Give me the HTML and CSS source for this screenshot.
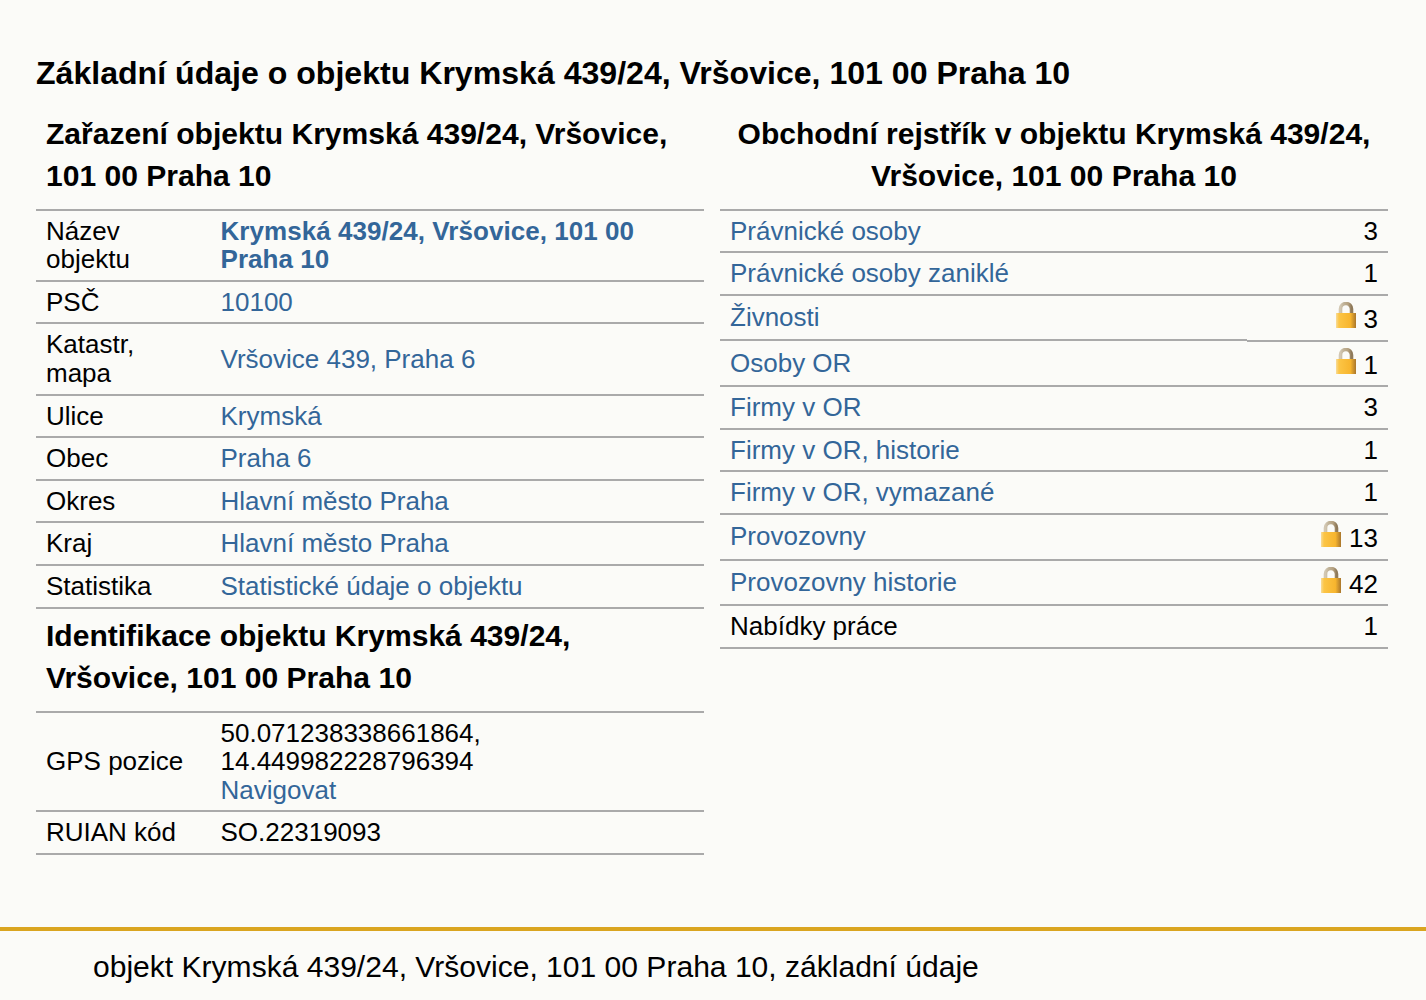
FILE: index.html
```html
<!DOCTYPE html>
<html lang="cs">
<head>
<meta charset="utf-8">
<title>Základní údaje o objektu</title>
<link rel="stylesheet" href="styles.css">
</head>
<body>
<svg class="defs" width="0" height="0" aria-hidden="true">
  <defs>
    <linearGradient id="lockbody" x1="0" x2="1" y1="0" y2="0">
      <stop offset="0" stop-color="#f8dc98"/>
      <stop offset=".15" stop-color="#fcc545"/>
      <stop offset=".72" stop-color="#f7b52e"/>
      <stop offset="1" stop-color="#a9762c"/>
    </linearGradient>
    <linearGradient id="lockbar" x1="0" x2="1" y1="0" y2="0">
      <stop offset="0" stop-color="#d2c7b2"/>
      <stop offset=".3" stop-color="#c0b297"/>
      <stop offset=".7" stop-color="#b5a180"/>
      <stop offset="1" stop-color="#8f7a5a"/>
    </linearGradient>
    <symbol id="lock" viewBox="0 0 20 26">
      <path d="M4.5 12V7a5.5 5.5 0 0 1 11 0V12" fill="none" stroke="url(#lockbar)" stroke-width="3.6"/>
      <rect x="0" y="11" width="20" height="15" fill="url(#lockbody)"/>
    </symbol>
  </defs>
</svg>
<main class="page">
  <h1 class="title">Základní údaje o objektu Krymská 439/24, Vršovice, 101 00 Praha 10</h1>
  <div class="columns">
    <section class="col">
      <h2 class="heading">Zařazení objektu Krymská 439/24, Vršovice, 101 00 Praha 10</h2>
      <div class="rows">
        <div class="kv h71"><div class="k">Název objektu</div><div class="v"><a class="strong" href="#">Krymská 439/24, Vršovice, 101 00 Praha 10</a></div></div>
        <div class="kv h42"><div class="k">PSČ</div><div class="v"><a href="#">10100</a></div></div>
        <div class="kv h72"><div class="k">Katastr, mapa</div><div class="v"><a href="#">Vršovice 439, Praha 6</a></div></div>
        <div class="kv h42"><div class="k">Ulice</div><div class="v"><a href="#">Krymská</a></div></div>
        <div class="kv h43"><div class="k">Obec</div><div class="v"><a href="#">Praha 6</a></div></div>
        <div class="kv h42"><div class="k">Okres</div><div class="v"><a href="#">Hlavní město Praha</a></div></div>
        <div class="kv h43"><div class="k">Kraj</div><div class="v"><a href="#">Hlavní město Praha</a></div></div>
        <div class="kv h43"><div class="k">Statistika</div><div class="v"><a href="#">Statistické údaje o objektu</a></div></div>
      </div>
      <h2 class="heading sub">Identifikace objektu Krymská 439/24, Vršovice, 101 00 Praha 10</h2>
      <div class="rows">
        <div class="kv h99"><div class="k">GPS pozice</div><div class="v">50.071238338661864, 14.449982228796394<br><a href="#">Navigovat</a></div></div>
        <div class="kv h43"><div class="k">RUIAN kód</div><div class="v">SO.22319093</div></div>
      </div>
    </section>
    <section class="col">
      <h2 class="heading center">Obchodní rejstřík v objektu Krymská 439/24, Vršovice, 101 00 Praha 10</h2>
      <div class="rows">
        <div class="cnt h42"><div class="label"><a href="#">Právnické osoby</a></div><div class="num">3</div></div>
        <div class="cnt h43"><div class="label"><a href="#">Právnické osoby zaniklé</a></div><div class="num">1</div></div>
        <div class="cnt h46 step"><div class="label"><a href="#">Živnosti</a></div><div class="num"><svg class="lock"><use href="#lock"/></svg>3</div></div>
        <div class="cnt h45"><div class="label"><a href="#">Osoby OR</a></div><div class="num"><svg class="lock"><use href="#lock"/></svg>1</div></div>
        <div class="cnt h43"><div class="label"><a href="#">Firmy v OR</a></div><div class="num">3</div></div>
        <div class="cnt h42"><div class="label"><a href="#">Firmy v OR, historie</a></div><div class="num">1</div></div>
        <div class="cnt h43"><div class="label"><a href="#">Firmy v OR, vymazané</a></div><div class="num">1</div></div>
        <div class="cnt h46"><div class="label"><a href="#">Provozovny</a></div><div class="num"><svg class="lock"><use href="#lock"/></svg>13</div></div>
        <div class="cnt h45"><div class="label"><a href="#">Provozovny historie</a></div><div class="num"><svg class="lock"><use href="#lock"/></svg>42</div></div>
        <div class="cnt h43"><div class="label">Nabídky práce</div><div class="num">1</div></div>
      </div>
    </section>
  </div>
</main>
<footer class="foot">objekt Krymská 439/24, Vršovice, 101 00 Praha 10, základní údaje</footer>
</body>
</html>
```
FILE: styles.css
```css
* { box-sizing: border-box; }
html, body { margin: 0; padding: 0; }
body {
  height: 1000px;
  overflow: hidden;
  background: #fbfbf8;
  color: #000;
  font-family: "Liberation Sans", Arial, sans-serif;
  font-size: 26px;
  line-height: 28.5px;
}
a { color: #336699; text-decoration: none; }
.defs { position: absolute; }
.page { height: 927px; padding: 52px 38px 0 36px; }
.title { margin: 0 0 19px; font-size: 32.1px; line-height: 42px; font-weight: 700; }
.columns { display: grid; grid-template-columns: 668px 668px; gap: 16px; }
.heading { margin: 0; padding: 0 10px 12px; font-size: 30.05px; line-height: 42px; font-weight: 700; }
.heading.sub { padding-top: 6px; }
.center { text-align: center; }
.rows { border-top: 2px solid #aaa; }
.h42 { height: 42px; }
.h43 { height: 43px; }
.h45 { height: 45px; }
.h46 { height: 46px; }
.h71 { height: 71px; }
.h72 { height: 72px; }
.h99 { height: 99px; }
.kv {
  display: grid;
  grid-template-columns: 174.5px 1fr;
  align-items: center;
  border-bottom: 2px solid #aaa;
  padding: 0 10px;
}
.h71.kv, .h72.kv { padding-bottom: .4px; }
.k { padding-right: 24px; }
.v { min-width: 0; }
.strong { font-weight: 700; letter-spacing: .05px; }
.cnt {
  display: flex;
  justify-content: space-between;
  align-items: center;
  border-bottom: 2px solid #aaa;
  padding: 0 10px;
}
.h46 .label { margin-bottom: 1px; }
.cnt.step { border-bottom: 0; padding: 0; align-items: flex-start; }
.step .label {
  flex: 0 0 527px;
  height: 45px;
  margin-bottom: 0;
  padding: 7px 10px 0;
  border-bottom: 2px solid #aaa;
}
.step .num {
  flex: 1;
  height: 46px;
  padding: 6px 10px 0 0;
  text-align: right;
  border-bottom: 2px solid #aaa;
}
.lock { width: 20px; height: 26px; margin-right: 8px; }
.num { white-space: nowrap; }
.foot {
  height: 73px;
  border-top: 4px solid #daa520;
  padding: 20px 0 0 93px;
  font-size: 30.05px;
  line-height: 32px;
}
```
